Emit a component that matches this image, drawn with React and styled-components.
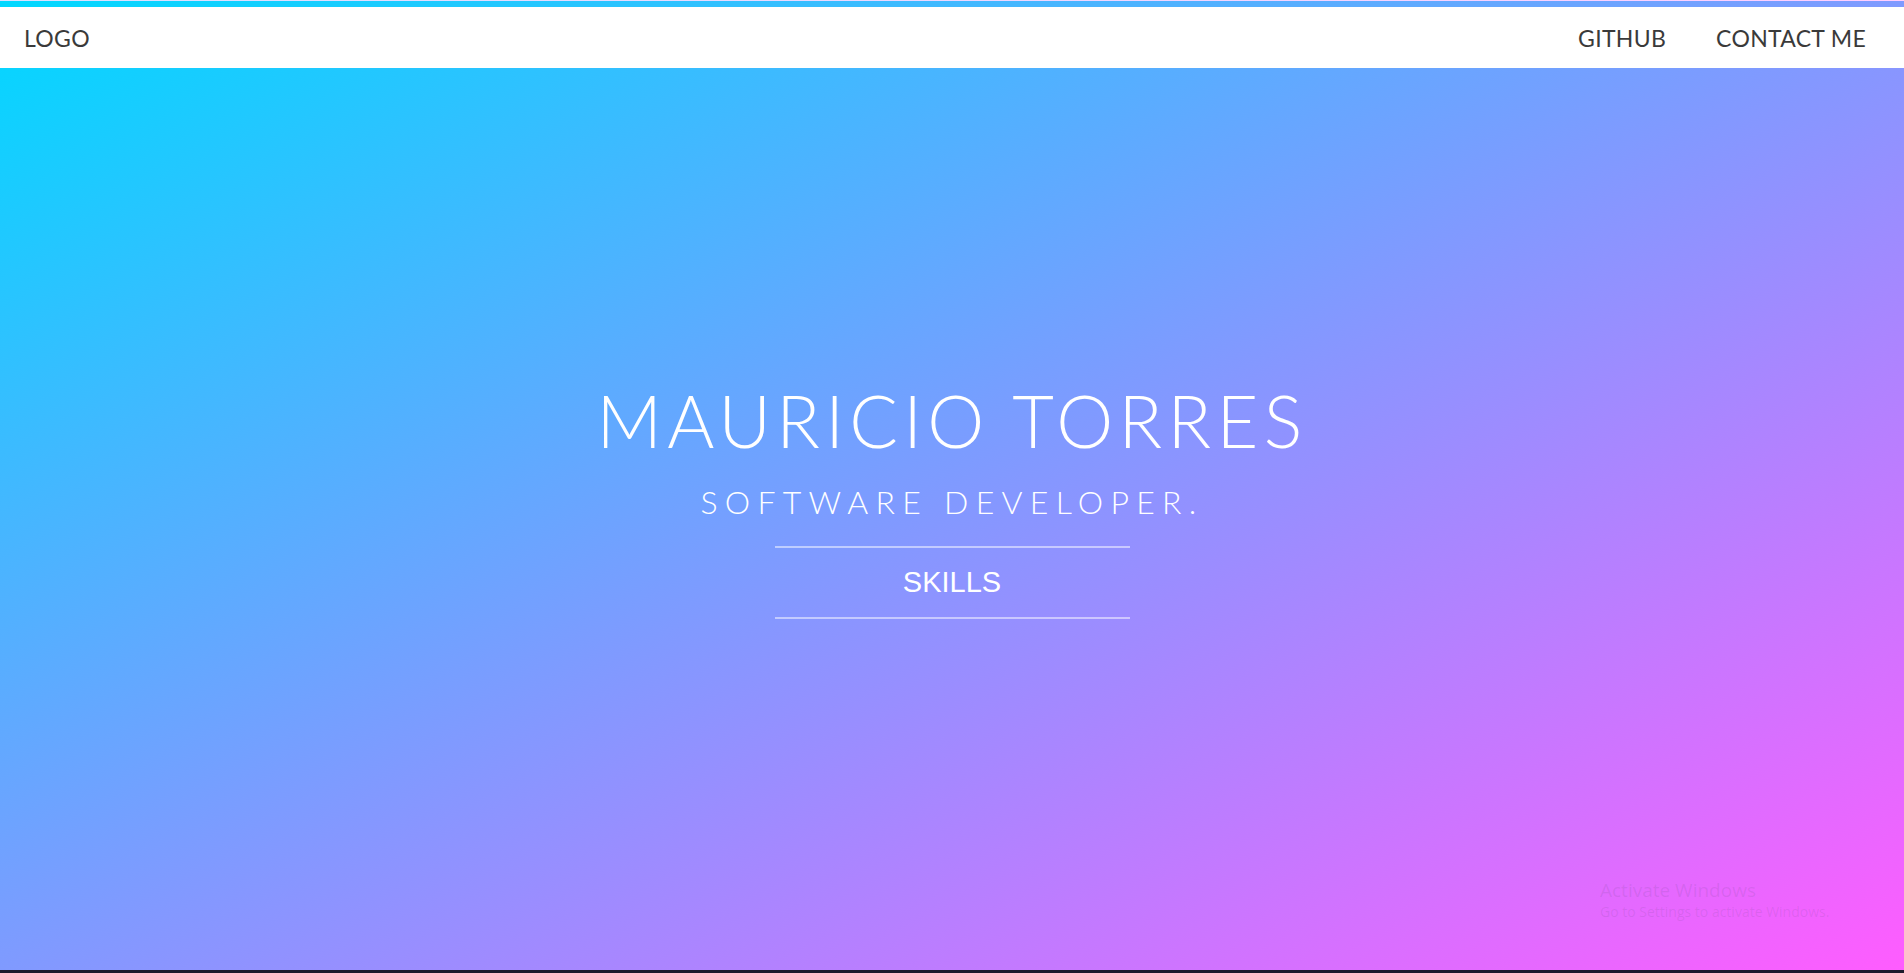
import React from 'react'
import styled, { createGlobalStyle } from 'styled-components'

const GlobalStyle = createGlobalStyle`
  html, body {
    margin: 0;
    padding: 0;
    background: #1c1a2b;
  }
  * {
    box-sizing: border-box;
  }
`

const Page = styled.div`
  position: relative;
  height: 970px;
  padding-top: 6px;
  border-top: 1px solid rgba(255, 255, 255, 0.7);
  background: linear-gradient(to bottom right, #00d8ff, #ff5cff);
  display: flex;
  flex-direction: column;
  overflow: hidden;
`
const Nav = styled.nav`
  height: 61px;
  background: white;
  display: flex;
  align-items: center;
  justify-content: space-between;
  padding: 0 38px 0 24px;
  font-family: 'Lato', 'Liberation Sans', sans-serif;
  font-size: 23px;
  font-weight: 400;
  color: #3a3a3a;
  letter-spacing: 0.3px;
`
const Logo = styled.div``
const NavLinks = styled.div`
  display: flex;
  gap: 50px;
`
const NavLink = styled.a`
  color: inherit;
  text-decoration: none;
  cursor: pointer;
`
const Hero = styled.main`
  flex: 1;
  display: flex;
  flex-direction: column;
  align-items: center;
  padding-top: 316px;
  color: white;
`
const Title = styled.h1`
  margin: 0;
  font-family: 'Lato', 'Liberation Sans', sans-serif;
  font-weight: 300;
  font-size: 72px;
  line-height: 1;
  letter-spacing: 5.3px;
`
const Subtitle = styled.h2`
  margin: 30px 0 0;
  font-family: 'Lato', 'Liberation Sans', sans-serif;
  font-weight: 300;
  font-size: 32px;
  line-height: 1;
  letter-spacing: 7.3px;
`
const SkillsButton = styled.button`
  margin-top: 28px;
  width: 355px;
  padding: 20px 0;
  background: transparent;
  border: none;
  border-top: 2px solid rgba(255, 255, 255, 0.5);
  border-bottom: 2px solid rgba(255, 255, 255, 0.5);
  color: white;
  font-family: 'Liberation Sans', Arial, sans-serif;
  font-size: 29px;
  line-height: 1;
  cursor: pointer;
`
const Watermark = styled.div`
  position: absolute;
  left: 1600px;
  top: 877px;
  font-family: 'Open Sans', 'Liberation Sans', sans-serif;
  color: rgba(90, 70, 120, 0.13);
`
const WatermarkTitle = styled.div`
  font-size: 19px;
  line-height: 24px;
`
const WatermarkText = styled.div`
  font-size: 14px;
  line-height: 20px;
`

export default function App() {
  return (
    <>
      <GlobalStyle />
      <Page>
        <Nav>
          <Logo>LOGO</Logo>
          <NavLinks>
            <NavLink>GITHUB</NavLink>
            <NavLink>CONTACT ME</NavLink>
          </NavLinks>
        </Nav>
        <Hero>
          <Title>MAURICIO TORRES</Title>
          <Subtitle>SOFTWARE DEVELOPER.</Subtitle>
          <SkillsButton>SKILLS</SkillsButton>
        </Hero>
        <Watermark>
          <WatermarkTitle>Activate Windows</WatermarkTitle>
          <WatermarkText>Go to Settings to activate Windows.</WatermarkText>
        </Watermark>
      </Page>
    </>
  )
}
